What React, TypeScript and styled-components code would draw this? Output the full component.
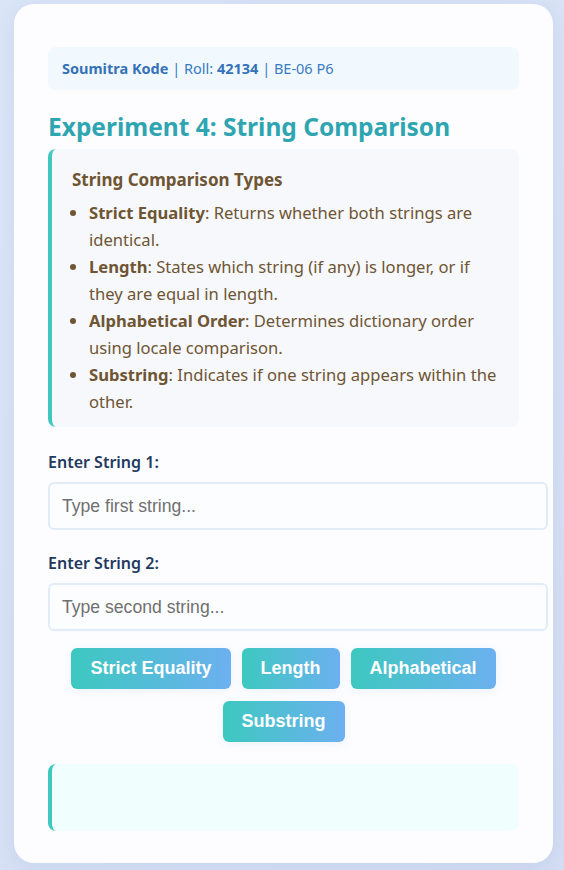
import { useState } from "react";
import styled, { createGlobalStyle } from "styled-components";

const GlobalStyle = createGlobalStyle`
  html, body {
    margin: 0;
    padding: 0;
    background: linear-gradient(135deg, #dae5f7 0%, #d3def3 100%);
    min-height: 100%;
  }
  body {
    font-family: "Noto Sans", "Open Sans", sans-serif;
  }
  * { box-sizing: content-box; }
`;

const Page = styled.div`
  padding: 4px 11px 8px 14px;
`;

const Card = styled.div`
  background: #fdfdff;
  border-radius: 20px;
  padding: 43px 34px 32px 34px;
  box-shadow: 0 4px 18px rgba(90, 120, 180, 0.12);
`;

const InfoBar = styled.div`
  background: #f1f9fe;
  border-radius: 8px;
  padding: 12px 14px;
  font-size: 14.5px;
  line-height: 19px;
  color: #3a7bc4;
  b { font-weight: 700; color: #3572b8; }
`;

const Title = styled.h2`
  margin: 21px 0 6px;
  font-size: 24.5px;
  line-height: 32px;
  font-weight: 700;
  color: #2fa5b2;
`;

const DescBox = styled.div`
  background: #f7f8fc;
  border-left: 4px solid #3ec8c0;
  border-radius: 8px;
  padding: 20px 20px 12px 20px;
  color: #6e5533;
`;

const DescTitle = styled.div`
  font-size: 17px;
  font-weight: 700;
  line-height: 22px;
  margin-bottom: 8px;
`;

const List = styled.ul`
  margin: 0;
  padding-left: 17px;
  font-size: 16.6px;
  line-height: 27px;
  li b { font-weight: 700; }
`;

const Label = styled.label<{ $first?: boolean }>`
  display: block;
  font-size: 16px;
  font-weight: 600;
  color: #1f3a5f;
  line-height: 22px;
  margin: ${(p) => (p.$first ? "24px" : "22px")} 0 9px;
`;

const Input = styled.input`
  display: block;
  width: 472px;
  height: 20px;
  padding: 12px 12px;
  border: 2px solid #e1ecf8;
  border-radius: 6px;
  background: #fcfdff;
  font-family: "Liberation Sans", Arial, sans-serif;
  font-size: 17.6px;
  line-height: 20px;
  color: #333;
  outline: none;
  &::placeholder { color: #707070; }
`;

const ButtonRow = styled.div`
  display: flex;
  flex-wrap: wrap;
  justify-content: center;
  gap: 12px 11px;
  margin-top: 17px;
`;

const Button = styled.button`
  height: 41px;
  padding: 0 19px;
  border: none;
  border-radius: 6px;
  background: linear-gradient(90deg, #3dc8c0 0%, #6cb0f0 100%);
  color: #fff;
  font-family: "Liberation Sans", Arial, sans-serif;
  font-size: 18px;
  font-weight: 700;
  cursor: pointer;
  box-shadow: 0 2px 8px rgba(100, 160, 230, 0.12);
`;

const Result = styled.div`
  margin-top: 22px;
  min-height: 67px;
  background: #f0fffe;
  border-left: 4px solid #3ec8c0;
  border-radius: 8px;
  padding: 0 16px;
  font-size: 16px;
  line-height: 67px;
  color: #1f3a5f;
`;

export default function App() {
  const [a, setA] = useState("");
  const [b, setB] = useState("");
  const [out, setOut] = useState("");

  const run = (kind: string) => {
    if (kind === "eq") setOut(a === b ? "Strings are identical." : "Strings are not identical.");
    if (kind === "len")
      setOut(a.length === b.length ? "Equal in length." : a.length > b.length ? "String 1 is longer." : "String 2 is longer.");
    if (kind === "alpha") {
      const c = a.localeCompare(b);
      setOut(c === 0 ? "Same order." : c < 0 ? "String 1 comes first." : "String 2 comes first.");
    }
    if (kind === "sub")
      setOut(a.includes(b) || b.includes(a) ? "One string appears within the other." : "No substring relation.");
  };

  return (
    <>
      <GlobalStyle />
      <Page>
        <Card>
          <InfoBar>
            <b>Soumitra Kode</b> | Roll: <b>42134</b> | BE-06 P6
          </InfoBar>
          <Title>Experiment 4: String Comparison</Title>
          <DescBox>
            <DescTitle>String Comparison Types</DescTitle>
            <List>
              <li><b>Strict Equality</b>: Returns whether both strings are identical.</li>
              <li><b>Length</b>: States which string (if any) is longer, or if they are equal in length.</li>
              <li><b>Alphabetical Order</b>: Determines dictionary order using locale comparison.</li>
              <li><b>Substring</b>: Indicates if one string appears within the other.</li>
            </List>
          </DescBox>
          <Label $first>Enter String 1:</Label>
          <Input placeholder="Type first string..." value={a} onChange={(e) => setA(e.target.value)} />
          <Label>Enter String 2:</Label>
          <Input placeholder="Type second string..." value={b} onChange={(e) => setB(e.target.value)} />
          <ButtonRow>
            <Button onClick={() => run("eq")}>Strict Equality</Button>
            <Button onClick={() => run("len")}>Length</Button>
            <Button onClick={() => run("alpha")}>Alphabetical</Button>
            <Button onClick={() => run("sub")}>Substring</Button>
          </ButtonRow>
          <Result>{out}</Result>
        </Card>
      </Page>
    </>
  );
}
